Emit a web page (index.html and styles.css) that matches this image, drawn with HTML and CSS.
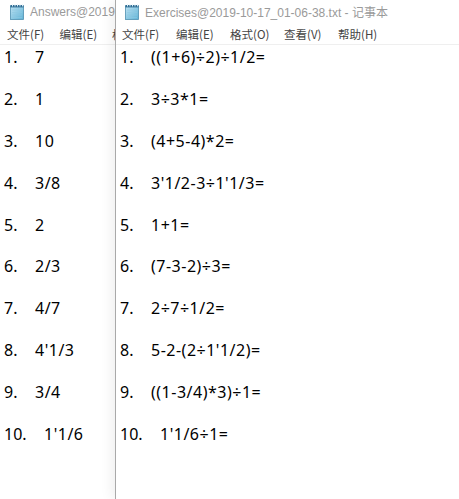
FILE: index.html
```html
<!DOCTYPE html>
<html lang="zh-CN">
<head>
<meta charset="utf-8">
<link rel="stylesheet" href="styles.css">
</head>
<body>
<div class="desktop">
  <div class="window win-answers">
    <div class="titlebar">
      <svg class="app-icon" viewBox="0 0 14 16" width="14" height="16">
        <defs>
          <linearGradient id="pg1" x1="0" y1="0" x2="1" y2="1">
            <stop offset="0" stop-color="#bfe3f3"/>
            <stop offset="1" stop-color="#5fb3d6"/>
          </linearGradient>
        </defs>
        <rect x="0.5" y="2" width="13" height="13.5" fill="url(#pg1)" stroke="#4f8fb0" stroke-width="0.8"/>
        <rect x="0.5" y="1" width="13" height="2.4" fill="#2f6d94"/>
        <g fill="#dfeff7"><rect x="2" y="0.4" width="1" height="2"/><rect x="4.5" y="0.4" width="1" height="2"/><rect x="7" y="0.4" width="1" height="2"/><rect x="9.5" y="0.4" width="1" height="2"/><rect x="12" y="0.4" width="1" height="2"/></g>
        <g stroke="#8fc8e0" stroke-width="0.6"><line x1="2" y1="6" x2="12" y2="6"/><line x1="2" y1="8.5" x2="12" y2="8.5"/><line x1="2" y1="11" x2="12" y2="11"/><line x1="2" y1="13.5" x2="12" y2="13.5"/></g>
      </svg>
      <span class="title">Answers@2019</span>
    </div>
    <div class="menubar">
      <span class="menu">文件(F)</span>
      <span class="menu">编辑(E)</span>
      <span class="menu menu-cut">格</span>
    </div>
    <div class="content">
      <div class="row"><span class="num">1.</span><span class="val">7</span></div>
      <div class="row"><span class="num">2.</span><span class="val">1</span></div>
      <div class="row"><span class="num">3.</span><span class="val">10</span></div>
      <div class="row"><span class="num">4.</span><span class="val">3/8</span></div>
      <div class="row"><span class="num">5.</span><span class="val">2</span></div>
      <div class="row"><span class="num">6.</span><span class="val">2/3</span></div>
      <div class="row"><span class="num">7.</span><span class="val">4/7</span></div>
      <div class="row"><span class="num">8.</span><span class="val">4'1/3</span></div>
      <div class="row"><span class="num">9.</span><span class="val">3/4</span></div>
      <div class="row"><span class="num">10.</span><span class="val wide">1'1/6</span></div>
    </div>
  </div>

  <div class="window win-exercises">
    <div class="titlebar">
      <svg class="app-icon" viewBox="0 0 14 16" width="14" height="16">
        <defs>
          <linearGradient id="pg2" x1="0" y1="0" x2="1" y2="1">
            <stop offset="0" stop-color="#bfe3f3"/>
            <stop offset="1" stop-color="#5fb3d6"/>
          </linearGradient>
        </defs>
        <rect x="0.5" y="2" width="13" height="13.5" fill="url(#pg2)" stroke="#4f8fb0" stroke-width="0.8"/>
        <rect x="0.5" y="1" width="13" height="2.4" fill="#2f6d94"/>
        <g fill="#dfeff7"><rect x="2" y="0.4" width="1" height="2"/><rect x="4.5" y="0.4" width="1" height="2"/><rect x="7" y="0.4" width="1" height="2"/><rect x="9.5" y="0.4" width="1" height="2"/><rect x="12" y="0.4" width="1" height="2"/></g>
        <g stroke="#8fc8e0" stroke-width="0.6"><line x1="2" y1="6" x2="12" y2="6"/><line x1="2" y1="8.5" x2="12" y2="8.5"/><line x1="2" y1="11" x2="12" y2="11"/><line x1="2" y1="13.5" x2="12" y2="13.5"/></g>
      </svg>
      <span class="title">Exercises@2019-10-17_01-06-38.txt - 记事本</span>
    </div>
    <div class="menubar">
      <span class="menu">文件(F)</span>
      <span class="menu">编辑(E)</span>
      <span class="menu">格式(O)</span>
      <span class="menu">查看(V)</span>
      <span class="menu">帮助(H)</span>
    </div>
    <div class="content">
      <div class="row"><span class="num">1.</span><span class="val">((1+6)÷2)÷1/2=</span></div>
      <div class="row"><span class="num">2.</span><span class="val">3÷3*1=</span></div>
      <div class="row"><span class="num">3.</span><span class="val">(4+5-4)*2=</span></div>
      <div class="row"><span class="num">4.</span><span class="val">3'1/2-3÷1'1/3=</span></div>
      <div class="row"><span class="num">5.</span><span class="val">1+1=</span></div>
      <div class="row"><span class="num">6.</span><span class="val">(7-3-2)÷3=</span></div>
      <div class="row"><span class="num">7.</span><span class="val">2÷7÷1/2=</span></div>
      <div class="row"><span class="num">8.</span><span class="val">5-2-(2÷1'1/2)=</span></div>
      <div class="row"><span class="num">9.</span><span class="val">((1-3/4)*3)÷1=</span></div>
      <div class="row"><span class="num">10.</span><span class="val wide">1'1/6÷1=</span></div>
    </div>
  </div>
</div>
</body>
</html>
```
FILE: styles.css
```css
html, body {
  margin: 0;
  padding: 0;
  background: #ffffff;
}
.desktop {
  position: relative;
  width: 459px;
  height: 499px;
  overflow: hidden;
}
.window {
  position: absolute;
  top: 0;
  height: 499px;
  background: #ffffff;
  font-family: "Noto Sans", "Noto Sans CJK SC", sans-serif;
}
.win-answers {
  left: 0;
  width: 115px;
  overflow: hidden;
}
.win-exercises {
  left: 115px;
  width: 420px;
  border-left: 1px solid #a9a9a9;
  box-shadow: -3px 0 12px rgba(0, 0, 0, 0.07);
}
.titlebar {
  height: 23px;
  display: flex;
  align-items: center;
  padding-left: 10px;
  gap: 6px;
}
.win-exercises .titlebar {
  padding-left: 9px;
}
.app-icon {
  flex: none;
  display: block;
}
.title {
  font-family: "Liberation Sans", "Noto Sans CJK SC", sans-serif;
  font-size: 12px;
  color: #9a9a9a;
  white-space: nowrap;
}
.menubar {
  height: 21px;
  display: grid;
  grid-template-columns: repeat(5, 54px);
  align-items: center;
  border-bottom: 1px solid #efefef;
  padding-left: 7px;
  white-space: nowrap;
}
.win-answers .menubar {
  grid-template-columns: 52.5px 52.5px 3px;
}
.win-exercises .menubar {
  padding-left: 6px;
}
.menu {
  font-family: "Noto Sans CJK SC", sans-serif;
  font-size: 11.5px;
  color: #444444;
}
.menu-cut {
  overflow: hidden;
}
.content {
  padding-top: 2px;
  padding-left: 4px;
}
.row {
  height: 41.9px;
  line-height: 21px;
  font-size: 16px;
  color: #000000;
  white-space: nowrap;
  display: flex;
}
.num {
  width: 31px;
  flex: none;
}
.val {
  letter-spacing: 0.5px;
}
.val.wide {
  margin-left: 9px;
}
```
